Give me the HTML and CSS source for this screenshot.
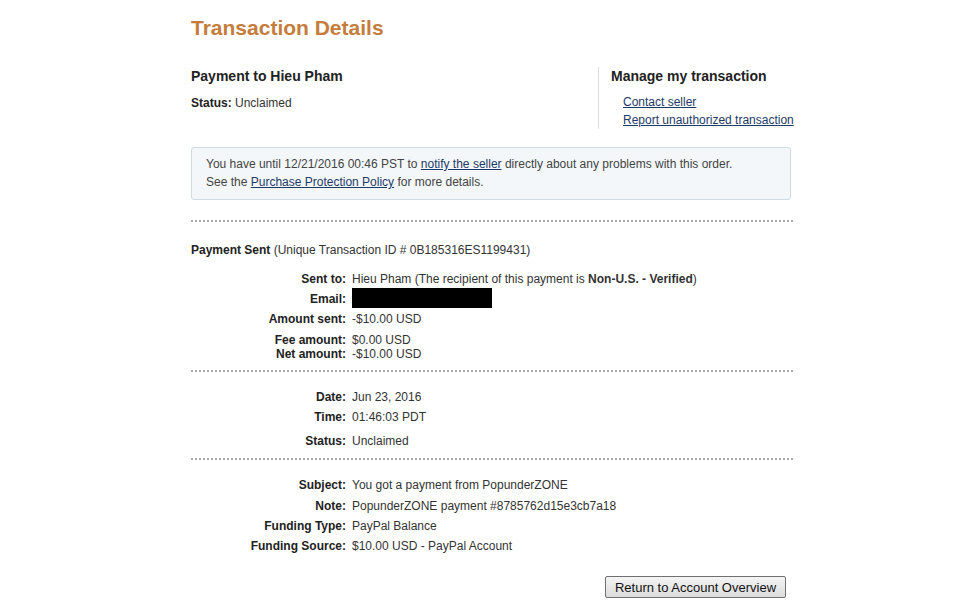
FILE: index.html
```html
<!DOCTYPE html>
<html lang="en">

<head>
    <meta charset="UTF-8">
    <title>Transaction Details</title>
    <link rel="stylesheet" href="styles.css">
</head>

<body>
    <div class="page">
        <h1 class="title">Transaction Details</h1>

        <div class="top">
            <div class="summary">
                <h2>Payment to Hieu Pham</h2>
                <p class="status"><b>Status:</b> Unclaimed</p>
            </div>
            <div class="manage">
                <h2>Manage my transaction</h2>
                <ul>
                    <li><a href="#">Contact seller</a></li>
                    <li><a href="#">Report unauthorized transaction</a></li>
                </ul>
            </div>
        </div>

        <div class="notice">
            You have until 12/21/2016 00:46 PST to <a href="#">notify the seller</a> directly about any problems with this order.<br>
            See the <a href="#">Purchase Protection Policy</a> for more details.
        </div>

        <hr class="dots">

        <p class="sent"><b>Payment Sent</b> (Unique Transaction ID # 0B185316ES1199431)</p>

        <div class="details first">
            <div class="row"><span class="label">Sent to:</span><span>Hieu Pham (The recipient of this payment is <b>Non-U.S. - Verified</b>)</span></div>
            <div class="row"><span class="label">Email:</span><span class="hidden"></span></div>
            <div class="row near"><span class="label">Amount sent:</span><span>-$10.00 USD</span></div>
            <div class="row far tight"><span class="label">Fee amount:</span><span>$0.00 USD</span></div>
            <div class="row tight snug"><span class="label">Net amount:</span><span>-$10.00 USD</span></div>
        </div>

        <hr class="dots close">

        <div class="details">
            <div class="row"><span class="label">Date:</span><span>Jun 23, 2016</span></div>
            <div class="row"><span class="label">Time:</span><span>01:46:03 PDT</span></div>
            <div class="row wide"><span class="label">Status:</span><span>Unclaimed</span></div>
        </div>

        <hr class="dots close">

        <div class="details">
            <div class="row"><span class="label">Subject:</span><span>You got a payment from PopunderZONE</span></div>
            <div class="row gap"><span class="label">Note:</span><span>PopunderZONE payment #8785762d15e3cb7a18</span></div>
            <div class="row"><span class="label">Funding Type:</span><span>PayPal Balance</span></div>
            <div class="row"><span class="label">Funding Source:</span><span>$10.00 USD - PayPal Account</span></div>
        </div>

        <div class="actions">
            <button type="button">Return to Account Overview</button>
        </div>
    </div>
</body>

</html>
```

FILE: styles.css
```css
body {
    margin: 0;
    background: #fff;
    font-family: "Liberation Sans", Arial, sans-serif;
    font-size: 12px;
    color: #333;
}

.page {
    width: 602px;
    margin-left: 191px;
    padding-top: 16px;
}

.title {
    margin: 0;
    font-size: 21px;
    line-height: 24px;
    color: #c47d3d;
}

.top {
    display: flex;
    margin-top: 27px;
}

.top h2 {
    margin: 0;
    font-size: 14px;
    line-height: 18px;
    color: #222;
}

.summary {
    flex: 0 0 407px;
}

.status {
    margin: 10px 0 0;
    line-height: 16px;
}

.status b,
.label,
.sent b {
    color: #222;
}

.manage {
    border-left: 1px solid #ddd;
    padding-left: 12px;
    white-space: nowrap;
}

.manage ul {
    list-style: none;
    margin: 8px 0 0 12px;
    padding: 0;
    line-height: 18px;
}

a {
    color: #1e3a66;
}

.notice {
    width: 570px;
    margin-top: 18px;
    padding: 7px 14px 8px;
    border: 1px solid #cfdce6;
    border-radius: 3px;
    background: #f3f7fa;
    line-height: 18px;
    color: #444;
}

.dots {
    margin: 20px 0 0;
    height: 0;
    border: 0;
    border-top: 2px dotted #aaa;
}

.dots.close {
    margin-top: 9px;
}

.sent {
    margin: 20px 0 0;
    line-height: 16px;
}

.details {
    margin-top: 17px;
}

.details.first {
    margin-top: 13px;
}

.row {
    display: flex;
    margin-top: 4px;
    line-height: 16px;
}

.row:first-child {
    margin-top: 0;
}

.row.gap {
    margin-top: 5px;
}

.row.near {
    margin-top: 3px;
}

.row.far {
    margin-top: 6px;
}

.row.wide {
    margin-top: 8px;
}

.row.tight {
    line-height: 14px;
}

.row.snug {
    margin-top: 0;
}

.label {
    width: 155px;
    margin-right: 6px;
    text-align: right;
    font-weight: bold;
}

.hidden {
    display: inline-block;
    width: 140px;
    height: 20px;
    margin-top: -3px;
    background: #000;
}

.actions {
    display: flex;
    justify-content: flex-end;
    margin: 22px 7px 0 0;
}

.actions button {
    width: 181px;
    height: 22px;
    padding: 0;
    border: 1px solid #707070;
    border-radius: 2px;
    background: linear-gradient(#f4f4f4, #dcdcdc);
    font-family: "Liberation Sans", Arial, sans-serif;
    font-size: 13px;
    color: #111;
}
```
